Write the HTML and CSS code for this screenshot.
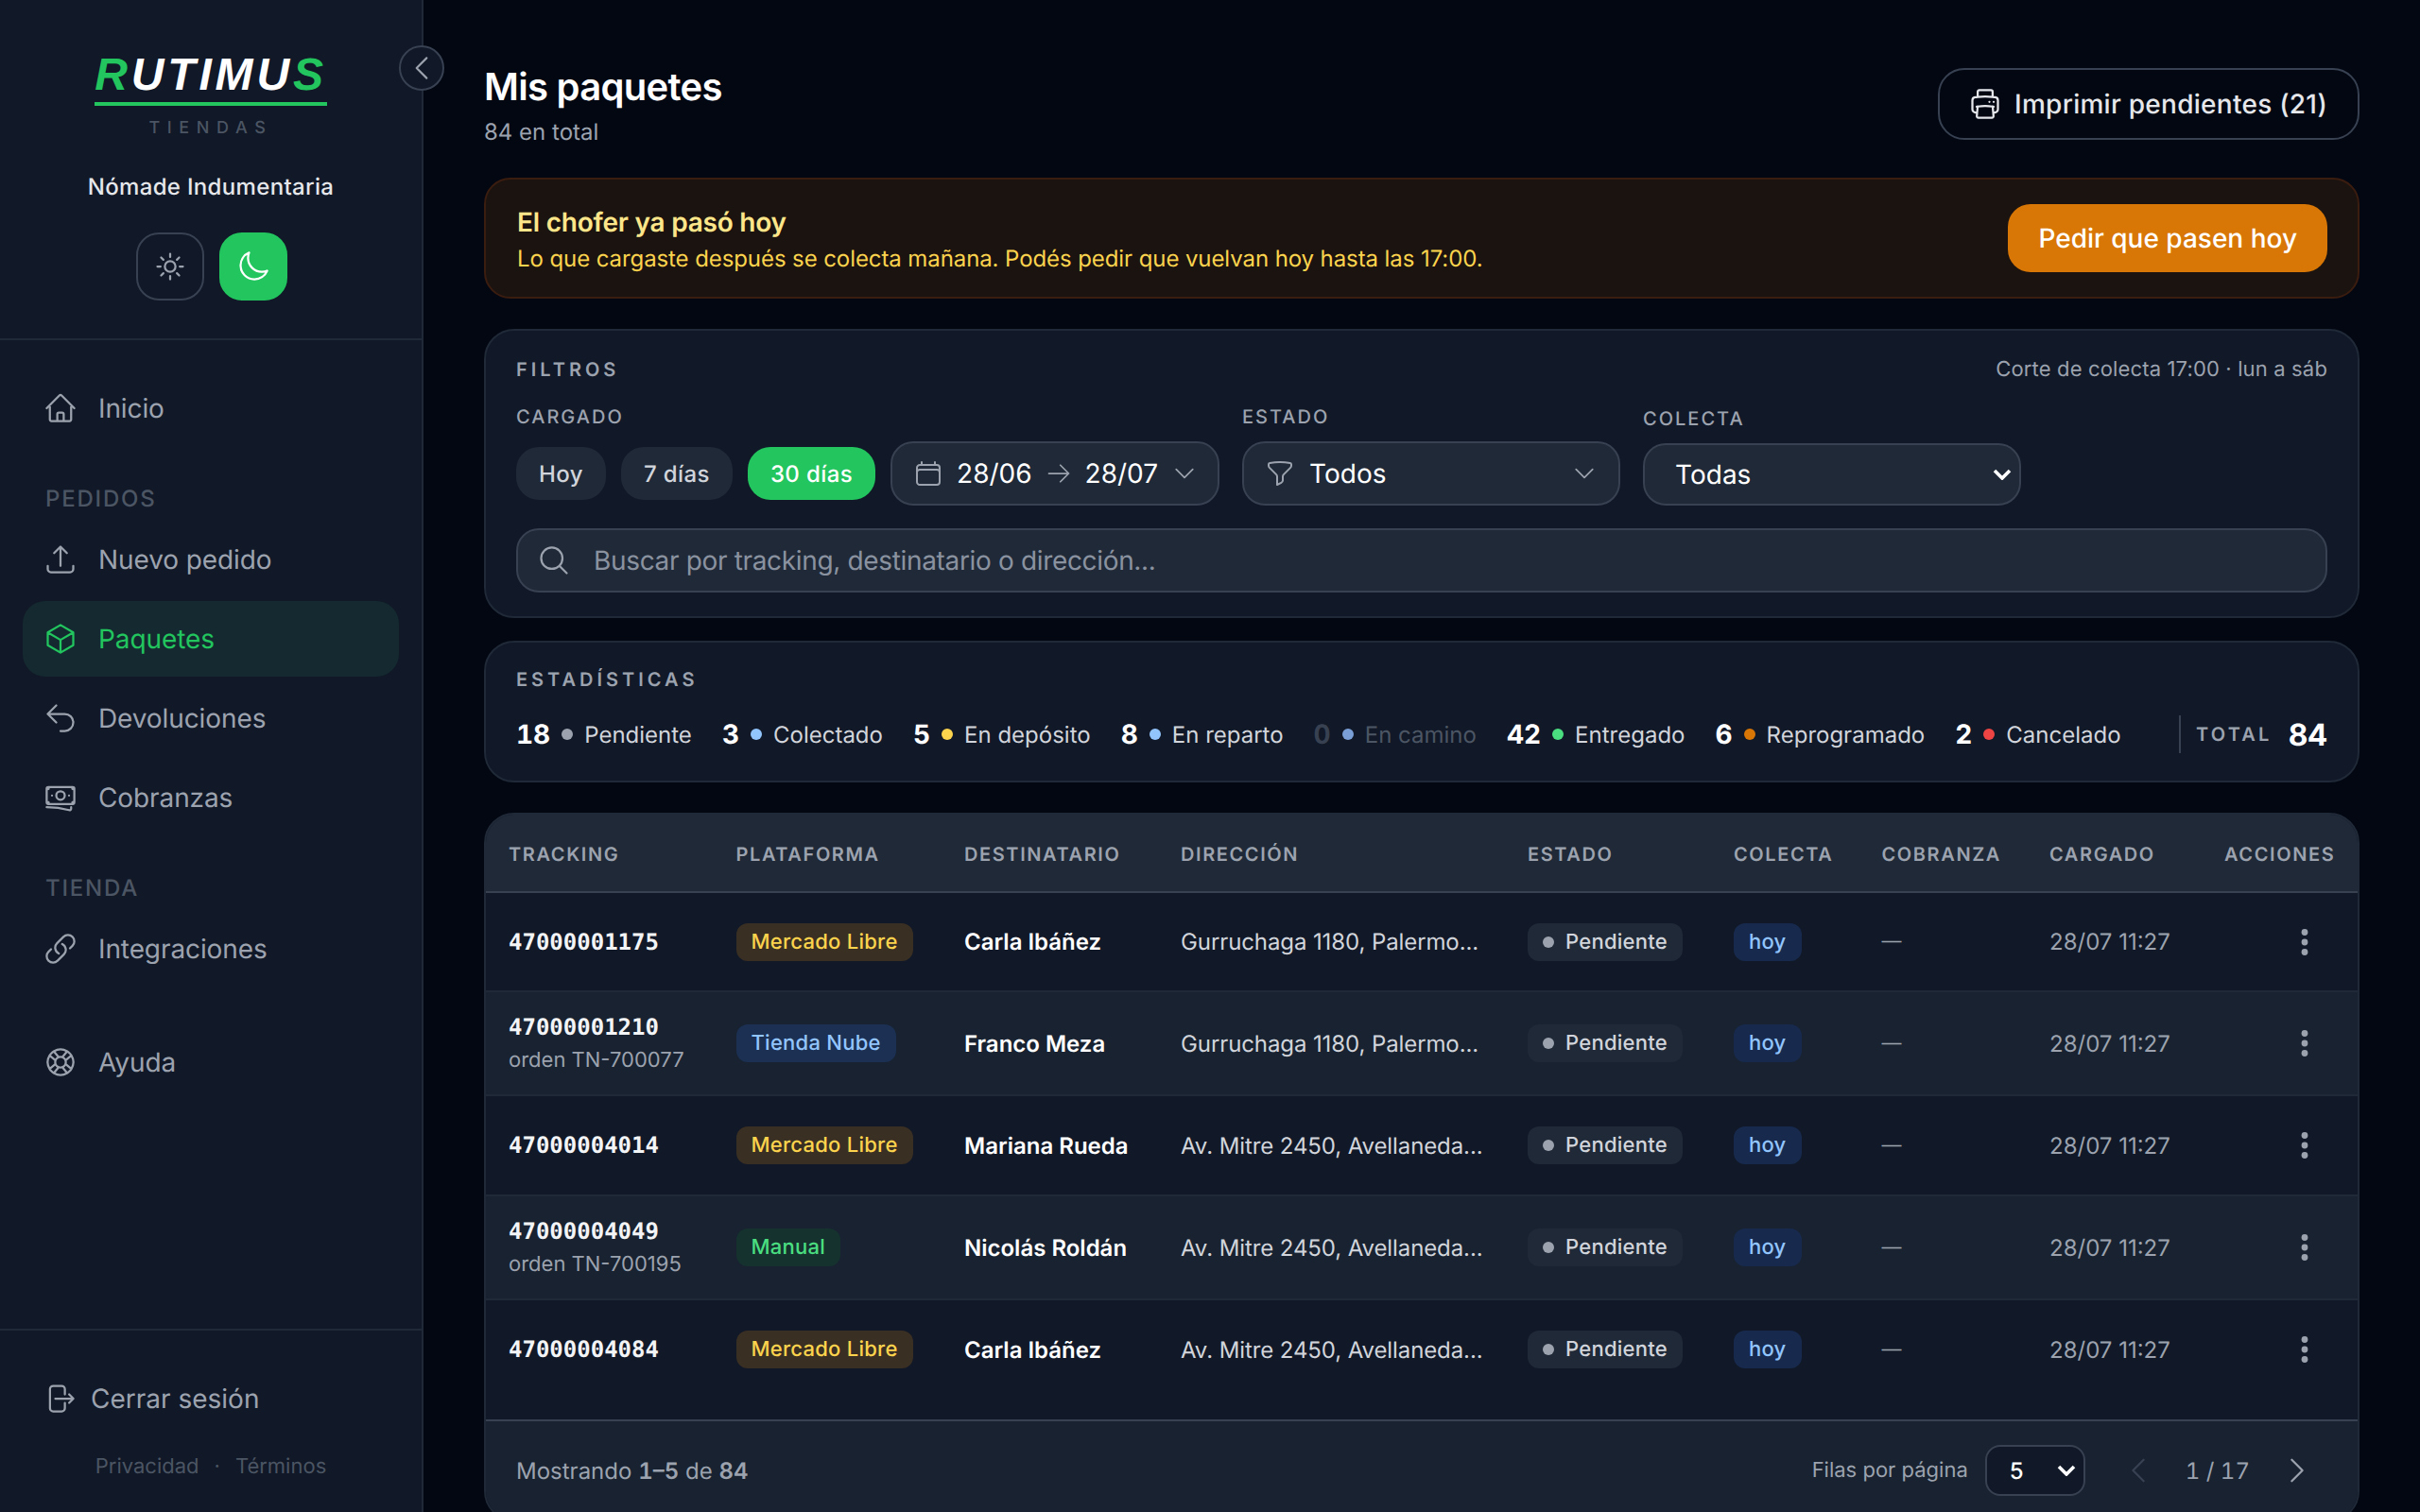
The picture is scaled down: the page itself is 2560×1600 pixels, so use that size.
FILE: index.html
```html
<!DOCTYPE html>
<html lang="es">
<head>
  <meta charset="UTF-8" />
  <meta name="viewport" content="width=device-width, initial-scale=1.0" />
  <title>Mis paquetes</title>
  <link rel="stylesheet" href="styles.css">
</head>
<body>
  <svg class="sprite" aria-hidden="true">
    <symbol id="i-home" viewBox="0 0 24 24"><path d="M2.25 12l8.954-8.955c.44-.439 1.152-.439 1.591 0L21.75 12M4.5 9.75v10.125c0 .621.504 1.125 1.125 1.125H9.75v-4.875c0-.621.504-1.125 1.125-1.125h2.25c.621 0 1.125.504 1.125 1.125V21h4.125c.621 0 1.125-.504 1.125-1.125V9.75M8.25 21h8.25"/></symbol>
    <symbol id="i-upload" viewBox="0 0 24 24"><path d="M3 16.5v2.25A2.25 2.25 0 005.25 21h13.5A2.25 2.25 0 0021 18.75V16.5m-13.5-9L12 3m0 0l4.5 4.5M12 3v13.5"/></symbol>
    <symbol id="i-cube" viewBox="0 0 24 24"><path d="M21 7.5l-9-5.25L3 7.5m18 0l-9 5.25m9-5.25v9l-9 5.25M3 7.5l9 5.25M3 7.5v9l9 5.25m0-9v9"/></symbol>
    <symbol id="i-return" viewBox="0 0 24 24"><path d="M9 15L3 9m0 0l6-6M3 9h12a6 6 0 010 12h-3"/></symbol>
    <symbol id="i-money" viewBox="0 0 24 24"><path d="M2.25 18.75a60.07 60.07 0 0115.797 2.101c.727.198 1.453-.342 1.453-1.096V18.75M3.75 4.5v.75A.75.75 0 013 6h-.75m0 0v-.375c0-.621.504-1.125 1.125-1.125H20.25M2.25 6v9m18-10.5v.75c0 .414.336.75.75.75h.75m-1.5-1.5h.375c.621 0 1.125.504 1.125 1.125v9.75c0 .621-.504 1.125-1.125 1.125h-.375m1.5-1.5H21a.75.75 0 00-.75.75v.75m0 0H3.75m0 0h-.375a1.125 1.125 0 01-1.125-1.125V15m1.5 1.5v-.75A.75.75 0 003 15h-.75M15 10.5a3 3 0 11-6 0 3 3 0 016 0zm3 0h.008v.008H18V10.5zm-12 0h.008v.008H6V10.5z"/></symbol>
    <symbol id="i-link" viewBox="0 0 24 24"><path d="M13.19 8.688a4.5 4.5 0 011.242 7.244l-4.5 4.5a4.5 4.5 0 01-6.364-6.364l1.757-1.757m13.35-.622l1.757-1.757a4.5 4.5 0 00-6.364-6.364l-4.5 4.5a4.5 4.5 0 001.242 7.244"/></symbol>
    <symbol id="i-help" viewBox="0 0 24 24"><path d="M16.712 4.33a9.027 9.027 0 011.652 1.306c.51.51.944 1.064 1.306 1.652M16.712 4.33l-3.448 4.138m3.448-4.138a9.014 9.014 0 00-9.424 0M19.67 7.288l-4.138 3.448m4.138-3.448a9.014 9.014 0 010 9.424m-4.138-5.976a3.736 3.736 0 00-.88-1.388 3.737 3.737 0 00-1.388-.88m2.268 2.268a3.765 3.765 0 010 2.528m-2.268-4.796a3.765 3.765 0 00-2.528 0m4.796 4.796c-.181.506-.475.982-.88 1.388a3.736 3.736 0 01-1.388.88m2.268-2.268l4.138 3.448m0 0a9.027 9.027 0 01-1.306 1.652c-.51.51-1.064.944-1.652 1.306m0 0l-3.448-4.138m3.448 4.138a9.014 9.014 0 01-9.424 0m5.976-4.138a3.765 3.765 0 01-2.528 0m0 0a3.736 3.736 0 01-1.388-.88 3.737 3.737 0 01-.88-1.388m2.268 2.268L7.288 19.67m0 0a9.024 9.024 0 01-1.652-1.306 9.027 9.027 0 01-1.306-1.652m0 0l4.138-3.448M4.33 16.712a9.014 9.014 0 010-9.424m4.138 5.976a3.765 3.765 0 010-2.528m0 0c.181-.506.475-.982.88-1.388a3.736 3.736 0 011.388-.88m-2.268 2.268L4.33 7.288m6.406 1.18L7.288 4.33m0 0a9.024 9.024 0 00-1.652 1.306A9.025 9.025 0 004.33 7.288"/></symbol>
    <symbol id="i-logout" viewBox="0 0 24 24"><path d="M15.75 9V5.25A2.25 2.25 0 0013.5 3h-6a2.25 2.25 0 00-2.25 2.25v13.5A2.25 2.25 0 007.5 21h6a2.25 2.25 0 002.25-2.25V15m3 0l3-3m0 0l-3-3m3 3H9"/></symbol>
    <symbol id="i-printer" viewBox="0 0 24 24"><path d="M6.72 13.829c-.24.03-.48.062-.72.096m.72-.096a42.415 42.415 0 0110.56 0m-10.56 0L6.34 18m10.94-4.171c.24.03.48.062.72.096m-.72-.096L17.66 18m0 0l.229 2.523a1.125 1.125 0 01-1.12 1.227H7.231c-.662 0-1.18-.568-1.12-1.227L6.34 18m11.318 0h1.091A2.25 2.25 0 0021 15.75V9.456c0-1.081-.768-2.015-1.837-2.175a48.055 48.055 0 00-1.913-.247M6.34 18H5.25A2.25 2.25 0 013 15.75V9.456c0-1.081.768-2.015 1.837-2.175a48.041 48.041 0 011.913-.247m10.5 0a48.536 48.536 0 00-10.5 0m10.5 0V3.375c0-.621-.504-1.125-1.125-1.125h-8.25c-.621 0-1.125.504-1.125 1.125v3.659M18 10.5h.008v.008H18V10.5zm-3 0h.008v.008H15V10.5z"/></symbol>
    <symbol id="i-sun" viewBox="0 0 24 24"><path d="M12 3v2.25m6.364.386l-1.591 1.591M21 12h-2.25m-.386 6.364l-1.591-1.591M12 18.75V21m-4.773-4.227l-1.591 1.591M5.25 12H3m4.227-4.773L5.636 5.636M15.75 12a3.75 3.75 0 11-7.5 0 3.75 3.75 0 017.5 0z"/></symbol>
    <symbol id="i-moon" viewBox="0 0 24 24"><path d="M21.752 15.002A9.718 9.718 0 0118 15.75c-5.385 0-9.75-4.365-9.75-9.75 0-1.33.266-2.597.748-3.752A9.753 9.753 0 003 11.25C3 16.635 7.365 21 12.75 21a9.753 9.753 0 009.002-5.998z"/></symbol>
    <symbol id="i-calendar" viewBox="0 0 24 24"><path d="M6.75 3v2.25M17.25 3v2.25M3 18.75V7.5a2.25 2.25 0 012.25-2.25h13.5A2.25 2.25 0 0121 7.5v11.25m-18 0A2.25 2.25 0 005.25 21h13.5A2.25 2.25 0 0021 18.75m-18 0v-7.5A2.25 2.25 0 015.25 9h13.5A2.25 2.25 0 0121 11.25v7.5"/></symbol>
    <symbol id="i-funnel" viewBox="0 0 24 24"><path d="M12 3c2.755 0 5.455.232 8.083.678.533.09.917.556.917 1.096v1.044a2.25 2.25 0 01-.659 1.591l-5.432 5.432a2.25 2.25 0 00-.659 1.591v2.927a2.25 2.25 0 01-1.244 2.013L9.75 21v-6.568a2.25 2.25 0 00-.659-1.591L3.659 7.409A2.25 2.25 0 013 5.818V4.774c0-.54.384-1.006.917-1.096A48.32 48.32 0 0112 3z"/></symbol>
    <symbol id="i-arrow" viewBox="0 0 24 24"><path d="M13.5 4.5L21 12m0 0l-7.5 7.5M21 12H3"/></symbol>
    <symbol id="i-search" viewBox="0 0 24 24"><path d="M21 21l-5.197-5.197m0 0A7.5 7.5 0 105.196 5.196a7.5 7.5 0 0010.607 10.607z"/></symbol>
    <symbol id="i-down" viewBox="0 0 24 24"><path d="M19.5 8.25l-7.5 7.5-7.5-7.5"/></symbol>
    <symbol id="i-left" viewBox="0 0 24 24"><path d="M15.75 19.5L8.25 12l7.5-7.5"/></symbol>
    <symbol id="i-right" viewBox="0 0 24 24"><path d="M8.25 4.5l7.5 7.5-7.5 7.5"/></symbol>
    <symbol id="i-dots" viewBox="0 0 40 40"><circle cx="20" cy="9.5" r="3.4"/><circle cx="20" cy="20" r="3.4"/><circle cx="20" cy="30.5" r="3.4"/></symbol>
  </svg>

  <div class="app">
    <aside class="sidebar">
      <button class="collapse-btn"><svg class="icon icon-sm"><use href="#i-left"/></svg></button>

      <div class="brand">
        <div class="logo"><span class="green">R</span>UTIMU<span class="green">S</span></div>
        <div class="logo-sub">TIENDAS</div>
        <div class="store-name">Nómade Indumentaria</div>
        <div class="theme-toggle">
          <button class="theme-btn"><svg class="icon"><use href="#i-sun"/></svg></button>
          <button class="theme-btn active"><svg class="icon"><use href="#i-moon"/></svg></button>
        </div>
      </div>

      <nav class="nav">
        <a class="nav-item"><svg class="icon"><use href="#i-home"/></svg>Inicio</a>
        <div class="nav-label">PEDIDOS</div>
        <div class="nav-group">
          <a class="nav-item"><svg class="icon"><use href="#i-upload"/></svg>Nuevo pedido</a>
          <a class="nav-item active"><svg class="icon"><use href="#i-cube"/></svg>Paquetes</a>
          <a class="nav-item"><svg class="icon"><use href="#i-return"/></svg>Devoluciones</a>
          <a class="nav-item"><svg class="icon"><use href="#i-money"/></svg>Cobranzas</a>
        </div>
        <div class="nav-label">TIENDA</div>
        <a class="nav-item"><svg class="icon"><use href="#i-link"/></svg>Integraciones</a>
        <a class="nav-item nav-help"><svg class="icon"><use href="#i-help"/></svg>Ayuda</a>
      </nav>

      <div class="side-footer">
        <a class="logout"><svg class="icon"><use href="#i-logout"/></svg>Cerrar sesión</a>
        <div class="legal"><span>Privacidad</span><span>·</span><span>Términos</span></div>
      </div>
    </aside>

    <main class="main">
      <header class="page-head">
        <div>
          <h1>Mis paquetes</h1>
          <p class="page-sub">84 en total</p>
        </div>
        <button class="print-btn"><svg class="icon"><use href="#i-printer"/></svg>Imprimir pendientes (21)</button>
      </header>

      <section class="alert">
        <div>
          <h2>El chofer ya pasó hoy</h2>
          <p>Lo que cargaste después se colecta mañana. Podés pedir que vuelvan hoy hasta las 17:00.</p>
        </div>
        <button class="alert-btn">Pedir que pasen hoy</button>
      </section>

      <section class="card filters">
        <div class="card-head">
          <span class="card-title">FILTROS</span>
          <span class="card-note">Corte de colecta 17:00 · lun a sáb</span>
        </div>
        <div class="filter-row">
          <div class="field">
            <label>CARGADO</label>
            <div class="range-row">
              <button class="chip">Hoy</button>
              <button class="chip">7 días</button>
              <button class="chip on">30 días</button>
              <button class="control date-box">
                <svg class="icon icon-cal"><use href="#i-calendar"/></svg>
                <span>28/06</span>
                <svg class="icon icon-arrow"><use href="#i-arrow"/></svg>
                <span>28/07</span>
                <svg class="icon icon-chev"><use href="#i-down"/></svg>
              </button>
            </div>
          </div>
          <div class="field wide">
            <label>ESTADO</label>
            <button class="control state-box">
              <svg class="icon icon-cal"><use href="#i-funnel"/></svg>
              <span>Todos</span>
              <svg class="icon icon-chev"><use href="#i-down"/></svg>
            </button>
          </div>
          <div class="field wide">
            <label>COLECTA</label>
            <select class="native-select"><option>Todas</option></select>
          </div>
        </div>
        <div class="search">
          <svg class="icon"><use href="#i-search"/></svg>
          <input type="text" placeholder="Buscar por tracking, destinatario o dirección..." />
        </div>
      </section>

      <section class="card stats">
        <div class="card-title">ESTADÍSTICAS</div>
        <div class="stats-row">
          <div class="stat"><b>18</b><i class="dot gray"></i>Pendiente</div>
          <div class="stat"><b>3</b><i class="dot blue"></i>Colectado</div>
          <div class="stat"><b>5</b><i class="dot yellow"></i>En depósito</div>
          <div class="stat"><b>8</b><i class="dot blue"></i>En reparto</div>
          <div class="stat zero"><b>0</b><i class="dot blue"></i>En camino</div>
          <div class="stat"><b>42</b><i class="dot green-dot"></i>Entregado</div>
          <div class="stat"><b>6</b><i class="dot orange"></i>Reprogramado</div>
          <div class="stat"><b>2</b><i class="dot red"></i>Cancelado</div>
          <div class="stat-total"><span>TOTAL</span><b>84</b></div>
        </div>
      </section>

      <section class="card table-card">
        <div class="table-wrap">
          <table>
            <colgroup>
              <col class="c-track"><col class="c-plat"><col class="c-dest"><col class="c-addr"><col class="c-state"><col class="c-col"><col class="c-cob"><col class="c-date"><col class="c-act">
            </colgroup>
            <thead>
              <tr><th>Tracking</th><th>Plataforma</th><th>Destinatario</th><th>Dirección</th><th>Estado</th><th>Colecta</th><th>Cobranza</th><th>Cargado</th><th>Acciones</th></tr>
            </thead>
            <tbody>
              <tr>
                <td><div class="track">47000001175</div></td>
                <td><span class="badge ml">Mercado Libre</span></td>
                <td class="name">Carla Ibáñez</td>
                <td class="addr">Gurruchaga 1180, Palermo...</td>
                <td><span class="badge state"><i class="dot gray"></i>Pendiente</span></td>
                <td><span class="badge today">hoy</span></td>
                <td class="muted dash">—</td>
                <td class="muted">28/07 11:27</td>
                <td class="act"><svg class="icon"><use href="#i-dots"/></svg></td>
              </tr>
              <tr>
                <td><div class="track">47000001210</div><div class="order">orden TN-700077</div></td>
                <td><span class="badge tn">Tienda Nube</span></td>
                <td class="name">Franco Meza</td>
                <td class="addr">Gurruchaga 1180, Palermo...</td>
                <td><span class="badge state"><i class="dot gray"></i>Pendiente</span></td>
                <td><span class="badge today">hoy</span></td>
                <td class="muted dash">—</td>
                <td class="muted">28/07 11:27</td>
                <td class="act"><svg class="icon"><use href="#i-dots"/></svg></td>
              </tr>
              <tr>
                <td><div class="track">47000004014</div></td>
                <td><span class="badge ml">Mercado Libre</span></td>
                <td class="name">Mariana Rueda</td>
                <td class="addr">Av. Mitre 2450, Avellaneda...</td>
                <td><span class="badge state"><i class="dot gray"></i>Pendiente</span></td>
                <td><span class="badge today">hoy</span></td>
                <td class="muted dash">—</td>
                <td class="muted">28/07 11:27</td>
                <td class="act"><svg class="icon"><use href="#i-dots"/></svg></td>
              </tr>
              <tr>
                <td><div class="track">47000004049</div><div class="order">orden TN-700195</div></td>
                <td><span class="badge manual">Manual</span></td>
                <td class="name">Nicolás Roldán</td>
                <td class="addr">Av. Mitre 2450, Avellaneda...</td>
                <td><span class="badge state"><i class="dot gray"></i>Pendiente</span></td>
                <td><span class="badge today">hoy</span></td>
                <td class="muted dash">—</td>
                <td class="muted">28/07 11:27</td>
                <td class="act"><svg class="icon"><use href="#i-dots"/></svg></td>
              </tr>
              <tr>
                <td><div class="track">47000004084</div></td>
                <td><span class="badge ml">Mercado Libre</span></td>
                <td class="name">Carla Ibáñez</td>
                <td class="addr">Av. Mitre 2450, Avellaneda...</td>
                <td><span class="badge state"><i class="dot gray"></i>Pendiente</span></td>
                <td><span class="badge today">hoy</span></td>
                <td class="muted dash">—</td>
                <td class="muted">28/07 11:27</td>
                <td class="act"><svg class="icon"><use href="#i-dots"/></svg></td>
              </tr>
            </tbody>
          </table>
        </div>
        <footer class="table-foot">
          <div class="showing">Mostrando <b>1–5</b> de <b>84</b></div>
          <div class="pager">
            <span class="rows-label">Filas por página</span>
            <select class="rows-select"><option>5</option></select>
            <svg class="icon icon-page off"><use href="#i-left"/></svg>
            <span class="page-num">1 / 17</span>
            <svg class="icon icon-page"><use href="#i-right"/></svg>
          </div>
        </footer>
      </section>
    </main>
  </div>
</body>
</html>
```
FILE: styles.css
```css
:root {
  color-scheme: dark;
  --page: #030712;
  --panel: #111827;
  --panel-alt: #182230;
  --line: #1f2937;
  --control: #1f2937;
  --control-line: #374151;
  --text: #f3f4f6;
  --muted: #9ca3af;
  --dim: #4b5563;
  --green: #22c55e;
  --select-arrow: url("data:image/svg+xml,%3Csvg xmlns='http://www.w3.org/2000/svg' viewBox='0 0 20 12'%3E%3Cpath d='M2 2l8 8 8-8' fill='none' stroke='%23fff' stroke-width='3.6'/%3E%3C/svg%3E");
}

* {
  box-sizing: border-box;
  margin: 0;
  padding: 0;
}

html, body {
  height: 100%;
  overflow: hidden;
}

body {
  background: var(--page);
  color: var(--text);
  font-family: Inter, 'Noto Sans', sans-serif;
  font-size: 24px;
  font-optical-sizing: none;
  text-rendering: geometricPrecision;
}

button, input, select {
  font-family: inherit;
  color: inherit;
  text-rendering: inherit;
}

button {
  background: none;
  border: none;
}

.sprite {
  display: none;
}

.icon {
  width: 36px;
  height: 36px;
  flex: none;
  fill: none;
  stroke: currentColor;
  stroke-width: 1.5;
  stroke-linecap: round;
  stroke-linejoin: round;
}

.app {
  display: flex;
  height: 100vh;
}

/* sidebar */
.sidebar {
  position: relative;
  width: 448px;
  flex: none;
  display: flex;
  flex-direction: column;
  background: var(--panel);
  border-right: 2px solid var(--line);
}

.collapse-btn {
  position: absolute;
  top: 48px;
  right: -24px;
  width: 48px;
  height: 48px;
  display: flex;
  align-items: center;
  justify-content: center;
  border: 2px solid var(--control-line);
  border-radius: 50%;
  background: var(--panel);
  color: var(--muted);
  z-index: 2;
}

.icon-sm {
  width: 34px;
  height: 34px;
}

.brand {
  height: 360px;
  flex: none;
  display: flex;
  flex-direction: column;
  align-items: center;
  padding-top: 52px;
  border-bottom: 2px solid var(--line);
}

.logo {
  font-family: 'Liberation Sans', Arial, sans-serif;
  font-size: 48px;
  font-weight: 700;
  font-style: italic;
  letter-spacing: 3.84px;
  line-height: 56px;
  color: #fff;
  border-bottom: 4px solid var(--green);
}

.green {
  color: var(--green);
}

.logo-sub {
  margin-top: 12px;
  font-size: 18px;
  font-weight: 500;
  line-height: 24px;
  letter-spacing: 7.6px;
  color: var(--dim);
}

.store-name {
  margin-top: 32px;
  font-size: 24px;
  font-weight: 500;
  line-height: 36px;
  letter-spacing: 0.33px;
  color: #e5e7eb;
}

.theme-toggle {
  display: flex;
  gap: 16px;
  margin: 30px 0 0 2px;
}

.theme-btn {
  width: 72px;
  height: 72px;
  display: flex;
  align-items: center;
  justify-content: center;
  border: 2px solid var(--control-line);
  border-radius: 24px;
  color: var(--muted);
}

.theme-btn.active {
  background: var(--green);
  border-color: var(--green);
  color: #fff;
}

.nav {
  padding: 32px 24px 0;
  display: flex;
  flex-direction: column;
}

.nav-group {
  display: flex;
  flex-direction: column;
  gap: 4px;
}

.nav-item {
  height: 80px;
  display: flex;
  align-items: center;
  gap: 22px;
  padding: 0 22px;
  border-radius: 24px;
  font-size: 28px;
  letter-spacing: -0.1px;
  color: var(--muted);
}

.nav-item.active {
  background: #142a30;
  color: var(--green);
}

.nav-label {
  padding: 40px 24px 8px;
  font-size: 24px;
  font-weight: 500;
  line-height: 32px;
  letter-spacing: 1.8px;
  color: var(--dim);
}

.nav-help {
  margin-top: 40px;
}

.side-footer {
  margin-top: auto;
  height: 194px;
  padding: 32px 24px 0;
  border-top: 2px solid var(--line);
}

.logout {
  height: 80px;
  display: flex;
  align-items: center;
  gap: 15px;
  padding: 0 21px;
  font-size: 28px;
  color: var(--muted);
}

.legal {
  display: flex;
  justify-content: center;
  gap: 16px;
  margin-top: 16px;
  font-size: 22px;
  line-height: 32px;
  color: var(--dim);
}

/* main */
.main {
  flex: 1;
  min-width: 0;
  padding: 72px 64px 0;
  display: flex;
  flex-direction: column;
}

.page-head {
  display: flex;
  justify-content: space-between;
  align-items: flex-start;
  height: 84px;
}

h1 {
  margin-top: -2px;
  font-size: 40px;
  font-weight: 600;
  line-height: 44px;
  letter-spacing: -0.7px;
  color: #fff;
}

.page-sub {
  margin-top: 10px;
  font-size: 24px;
  line-height: 32px;
  color: var(--muted);
}

.print-btn {
  height: 76px;
  display: flex;
  align-items: center;
  gap: 13px;
  padding: 0 32px 0 30px;
  border: 2px solid var(--control-line);
  border-radius: 28px;
  font-size: 28px;
  font-weight: 500;
  letter-spacing: 0.27px;
  color: #e5e7eb;
}

.alert {
  margin-top: 32px;
  height: 128px;
  flex: none;
  display: flex;
  align-items: center;
  justify-content: space-between;
  padding: 0 32px 0 33px;
  background: #1b1310;
  border: 2px solid #3b1d10;
  border-radius: 28px;
}

.alert h2 {
  font-size: 28px;
  font-weight: 600;
  line-height: 40px;
  letter-spacing: -0.23px;
  color: #fde68a;
}

.alert p {
  margin-top: 3px;
  font-size: 24px;
  line-height: 32px;
  letter-spacing: -0.09px;
  color: #fcd34d;
}

.alert-btn {
  height: 72px;
  padding: 0 32px;
  border-radius: 24px;
  background: #d97706;
  color: #fff;
  font-size: 28px;
  font-weight: 500;
}

.card {
  flex: none;
  background: var(--panel);
  border: 2px solid var(--line);
  border-radius: 32px;
}

.card-title {
  font-size: 20px;
  font-weight: 600;
  line-height: 28px;
  letter-spacing: 4px;
  color: var(--muted);
}

.card-note {
  font-size: 22px;
  line-height: 28px;
  letter-spacing: 0.15px;
  color: var(--muted);
}

.card-head {
  display: flex;
  justify-content: space-between;
}

/* filters */
.filters {
  margin-top: 32px;
  height: 306px;
  padding: 27px 32px 0;
}

.filter-row {
  display: flex;
  align-items: flex-end;
  gap: 24px;
  margin-top: 24px;
}

.field label {
  display: block;
  margin-bottom: 14px;
  font-size: 20px;
  font-weight: 500;
  line-height: 24px;
  letter-spacing: 2px;
  color: var(--muted);
}

.wide {
  width: 400px;
}

.range-row {
  display: flex;
  align-items: center;
  gap: 16px;
}

.chip {
  height: 56px;
  padding: 0 24px;
  border-radius: 24px;
  background: var(--control);
  font-size: 24px;
  font-weight: 500;
  letter-spacing: 0.4px;
  color: #d1d5db;
}

.chip.on {
  background: var(--green);
  color: #fff;
}

.control {
  height: 68px;
  display: flex;
  align-items: center;
  background: var(--control);
  border: 2px solid var(--control-line);
  border-radius: 24px;
  font-size: 28px;
  color: #fff;
}

.date-box {
  width: 348px;
  padding: 0 22px;
  gap: 14px;
}

.state-box {
  width: 100%;
  padding: 0 22px;
  gap: 15px;
}

.state-box .icon-chev {
  margin-left: auto;
}

.icon-cal {
  width: 32px;
  height: 32px;
  color: var(--muted);
}

.icon-arrow {
  width: 28px;
  height: 28px;
  color: var(--muted);
}

.icon-chev {
  width: 28px;
  height: 28px;
  color: var(--muted);
}

.native-select {
  appearance: none;
  display: block;
  width: 100%;
  height: 66px;
  padding: 0 0 0 32px;
  background: var(--control) var(--select-arrow) no-repeat right 8px center / 20px 12px;
  border: 2px solid var(--control-line);
  border-radius: 24px;
  font-size: 28px;
  color: #fff;
}

.search {
  margin-top: 24px;
  height: 68px;
  display: flex;
  align-items: center;
  gap: 24px;
  padding: 0 20px;
  background: var(--control);
  border: 2px solid var(--control-line);
  border-radius: 24px;
  color: var(--muted);
}

.search input {
  flex: 1;
  background: none;
  border: none;
  outline: none;
  font-size: 28px;
  letter-spacing: -0.34px;
}

.search input::placeholder {
  color: #8a92a0;
  opacity: 1;
}

/* stats */
.stats {
  margin-top: 24px;
  height: 150px;
  padding: 25px 32px 0;
}

.stats-row {
  display: flex;
  align-items: center;
  gap: 32px;
  margin-top: 22px;
  height: 44px;
}

.stat {
  display: flex;
  align-items: center;
  gap: 12px;
  font-size: 24px;
  color: #d1d5db;
}

.stat b {
  font-size: 28px;
  font-weight: 700;
  font-variant-numeric: tabular-nums;
  color: #fff;
}

.stat.zero {
  color: var(--dim);
}

.stat.zero b {
  color: var(--control-line);
}

.stat.zero .dot {
  background: #7a9fd6;
}

.dot {
  display: inline-block;
  width: 12px;
  height: 12px;
  border-radius: 50%;
  flex: none;
}

.gray { background: #9ca3af; }
.blue { background: #93c5fd; }
.yellow { background: #fcd34d; }
.green-dot { background: #4ade80; }
.orange { background: #d97706; }
.red { background: #ef4444; }

.stat-total {
  margin-left: auto;
  display: flex;
  align-items: center;
  gap: 17px;
  height: 40px;
  padding-left: 16px;
  border-left: 2px solid var(--control-line);
}

.stat-total span {
  font-size: 20px;
  font-weight: 600;
  letter-spacing: 3.2px;
  color: var(--muted);
}

.stat-total b {
  font-size: 32px;
  font-weight: 700;
  font-variant-numeric: tabular-nums;
  color: #fff;
}

/* table */
.table-card {
  margin-top: 32px;
  overflow: hidden;
}

.table-wrap {
  height: 640px;
}

table {
  width: 100%;
  table-layout: fixed;
  border-collapse: collapse;
}

.c-track { width: 240.5px; }
.c-plat { width: 241.5px; }
.c-dest { width: 229px; }
.c-addr { width: 367px; }
.c-state { width: 218px; }
.c-col { width: 156.5px; }
.c-cob { width: 177.5px; }
.c-date { width: 185px; }
.c-act { width: 165px; }

th {
  height: 82px;
  padding: 2px 24px 0;
  background: var(--control);
  border-bottom: 2px solid var(--control-line);
  text-align: left;
  text-transform: uppercase;
  font-size: 20px;
  font-weight: 600;
  letter-spacing: 1.6px;
  white-space: nowrap;
  color: var(--muted);
}

td {
  height: 105px;
  padding: 0 24px;
  border-bottom: 2px solid var(--line);
  white-space: nowrap;
  color: #d1d5db;
}

tbody tr:nth-child(even) {
  background: var(--panel-alt);
}

tbody tr:nth-child(even) td {
  height: 110px;
}

tbody tr:nth-child(3) td {
  height: 106px;
}

tbody tr:last-child td {
  border-bottom: none;
}

.track {
  font-family: 'DejaVu Sans Mono', monospace;
  font-size: 24px;
  font-weight: 700;
  line-height: 36px;
  color: #f3f4f6;
}

.order {
  margin: 3px 0;
  font-size: 22px;
  line-height: 28px;
  color: var(--muted);
}

.name {
  font-weight: 600;
  color: #fff;
}

.addr {
  letter-spacing: -0.1px;
}

.muted {
  color: var(--muted);
}

.dash {
  font-size: 21px;
}

.badge {
  display: inline-flex;
  align-items: center;
  gap: 12px;
  height: 40px;
  padding: 0 16px;
  border-radius: 12px;
  font-size: 22px;
  font-weight: 500;
  letter-spacing: 0.25px;
}

.ml { background: #3a2f23; color: #fcd34d; }
.tn { background: #1b3052; color: #93c5fd; }
.manual { background: #15322f; color: #4ade80; }
.state { background: var(--control); color: #d1d5db; }
.today { background: #172a4e; color: #93c5fd; }

.act {
  padding: 0;
  color: var(--muted);
}

.act .icon {
  display: block;
  width: 40px;
  height: 40px;
  margin-left: 89px;
  fill: currentColor;
  stroke: none;
}

.table-foot {
  height: 106px;
  display: flex;
  align-items: center;
  justify-content: space-between;
  padding: 0 46px 0 32px;
  background: var(--panel-alt);
  border-top: 2px solid var(--control-line);
}

.showing {
  font-size: 24px;
  color: var(--muted);
}

.showing b {
  font-weight: 600;
  font-variant-numeric: tabular-nums;
}

.pager {
  display: flex;
  align-items: center;
}

.rows-label {
  font-size: 22px;
  color: var(--muted);
}

.rows-select {
  appearance: none;
  width: 106px;
  height: 54px;
  margin-left: 18px;
  padding-left: 24px;
  background: var(--panel) var(--select-arrow) no-repeat right 8px center / 20px 12px;
  border: 2px solid var(--control-line);
  border-radius: 16px;
  font-size: 24px;
  font-weight: 500;
  color: #fff;
}

.icon-page {
  color: var(--muted);
}

.icon-page.off {
  margin-left: 38px;
  color: var(--control-line);
}

.page-num {
  margin: 0 32px;
  font-size: 24px;
  font-variant-numeric: tabular-nums;
  color: var(--muted);
}
```
